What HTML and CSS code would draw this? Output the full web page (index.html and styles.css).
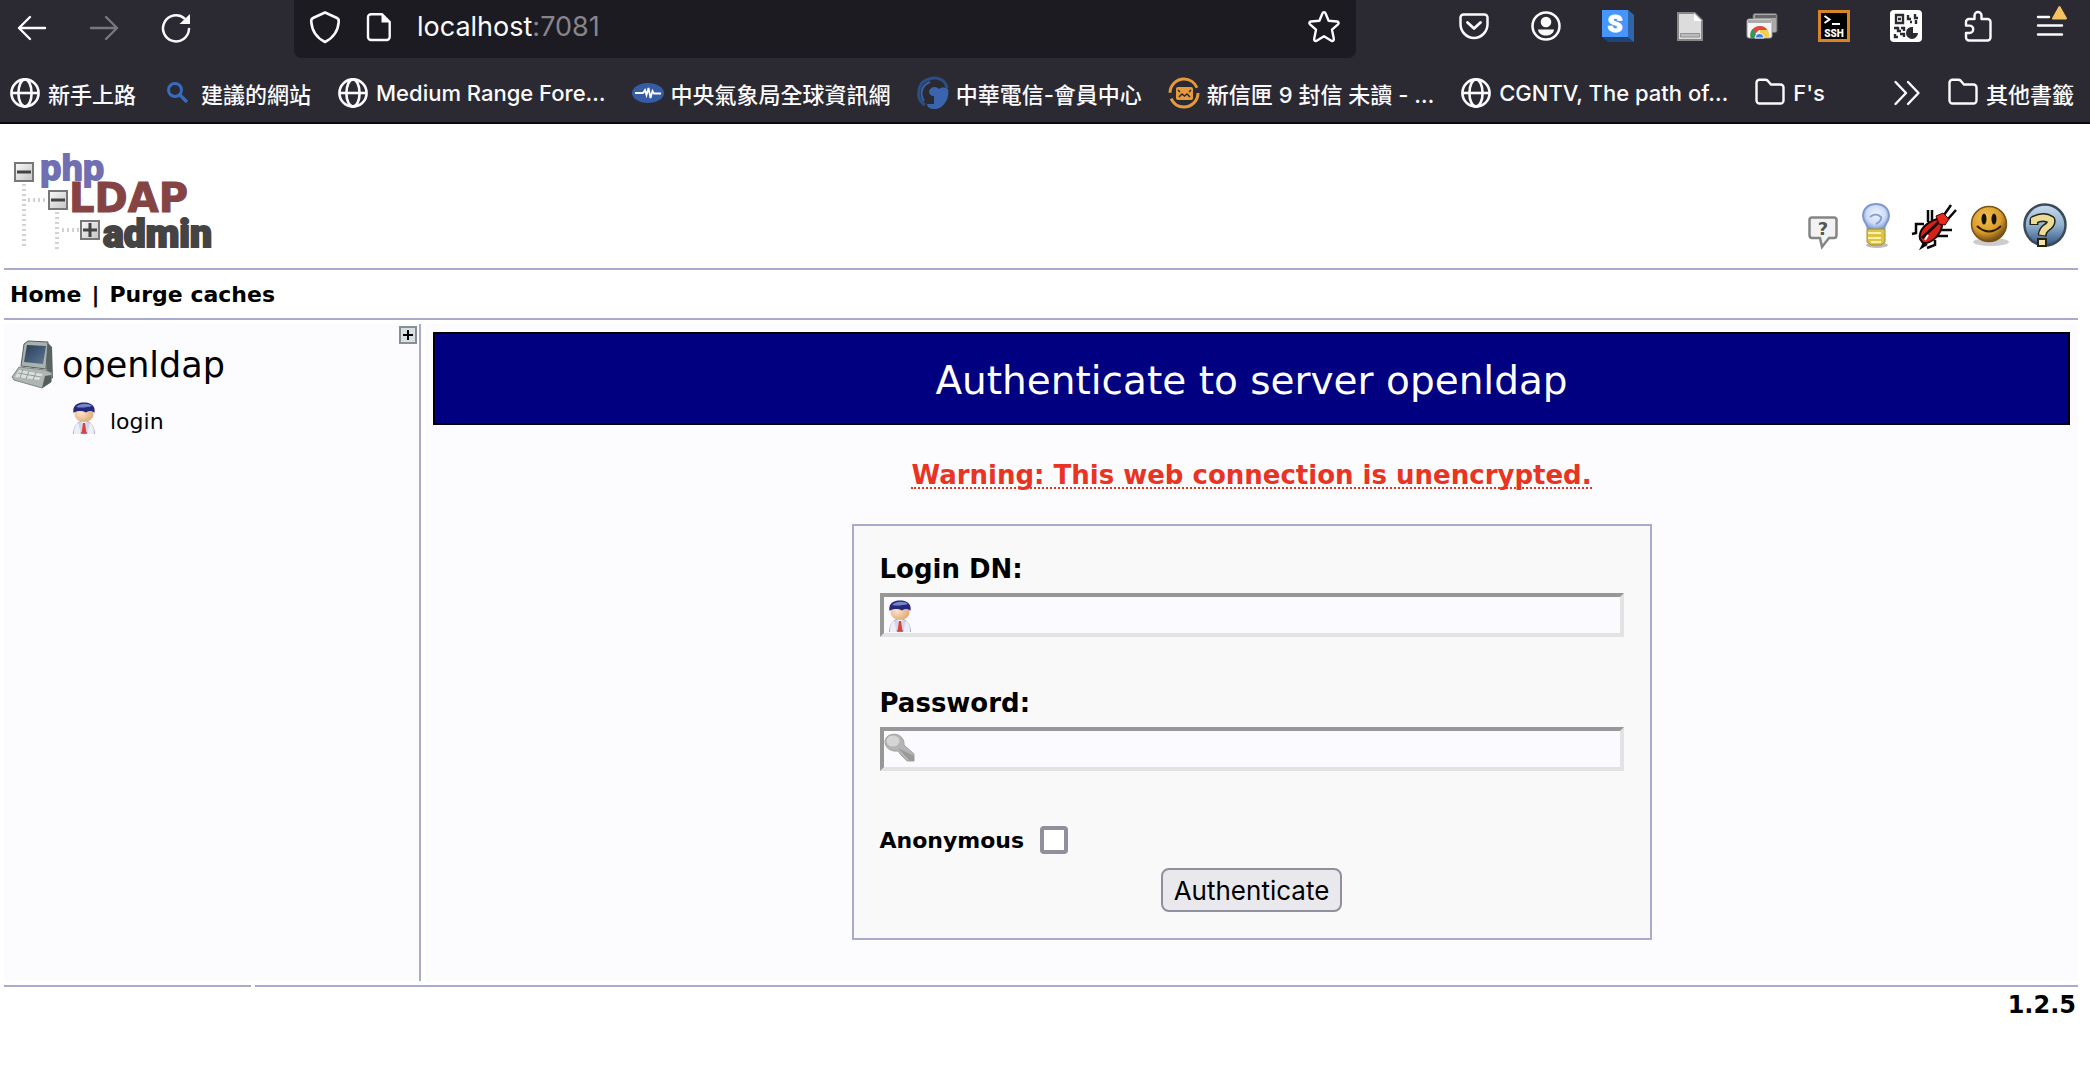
FILE: index.html
```html
<!DOCTYPE html>
<html lang="zh-Hant">
<head>
<meta charset="utf-8">
<title>phpLDAPadmin (1.2.5) -</title>
<link rel="stylesheet" href="styles.css">
</head>
<body>
<svg class="defs" width="0" height="0" aria-hidden="true">
  <defs>
    <linearGradient id="metal" x1="0" y1="0" x2="1" y2="1"><stop offset="0" stop-color="#fafafa"/><stop offset="1" stop-color="#c4c4c4"/></linearGradient>
    <radialGradient id="gold" cx=".4" cy=".3" r=".75"><stop offset="0" stop-color="#f3c04a"/><stop offset=".6" stop-color="#d99a2b"/><stop offset="1" stop-color="#5c3d10"/></radialGradient>
    <linearGradient id="sky" x1="0" y1="0" x2="0" y2="1"><stop offset="0" stop-color="#c9dcec"/><stop offset=".5" stop-color="#93b1cf"/><stop offset="1" stop-color="#2f5584"/></linearGradient>
    <radialGradient id="glass" cx=".5" cy=".4" r=".6"><stop offset="0" stop-color="#eef4fd"/><stop offset=".6" stop-color="#cddcf5"/><stop offset="1" stop-color="#7795d0"/></radialGradient>
    <radialGradient id="skin" cx=".35" cy=".4" r=".7"><stop offset="0" stop-color="#fde3c4"/><stop offset="1" stop-color="#dca777"/></radialGradient>
    <linearGradient id="screen" x1="0" y1="0" x2="1" y2="1"><stop offset="0" stop-color="#2a3c55"/><stop offset="1" stop-color="#5b7894"/></linearGradient>
    <symbol id="globe" viewBox="0 0 32 32"><g fill="none" stroke="#fbfbfe" stroke-width="2.6"><circle cx="16" cy="16" r="13.6"/><ellipse cx="16" cy="16" rx="6.6" ry="13.6"/><path d="M2.500 16H29.500"/></g></symbol>
    <symbol id="folder" viewBox="0 0 32 32"><path d="M2.500 8V23.500a3 3 0 0 0 3 3H26.500a3 3 0 0 0 3-3V10.500a3 3 0 0 0-3-3H17L13.500 3.500a3 3 0 0 0-2-.8H5.500a3 3 0 0 0-3 3Z" fill="none" stroke="#fbfbfe" stroke-width="2.400"/></symbol>
    <symbol id="user" viewBox="0 0 24 32">
      <path d="M1.500 32C2 23 6 19 12 19S22 23 22.500 32Z" fill="#d3d5e8" stroke="#a9abc9"/>
      <path d="M2 32V30H22V32Z" fill="#8d8fae"/>
      <path d="M6 21L9 32H2C2 26 3 23 6 21ZM18 21L15 32H22C22 26 21 23 18 21Z" fill="#eceef8"/>
      <path d="M9 19L12 23L15 19Z" fill="#fff"/>
      <path d="M11 21H13L14.500 31.500H9.500Z" fill="#d8433c"/>
      <ellipse cx="12" cy="12.500" rx="9.500" ry="7.500" fill="url(#skin)"/>
      <path d="M1.500 11C0 3 6 .5 12 .5S24 3 22.500 11C20 8.500 17 8.500 14 10.500C10 8.500 5 8.500 1.500 11Z" fill="#26267f"/>
      <path d="M4 5C7 1 17 .5 20 4C15 5.500 9 6 4 5Z" fill="#7387c4"/>
    </symbol>
  </defs>
</svg>

<header class="chrome">
  <div class="toolbar">
    <div class="nav-buttons">
      <button class="tool" type="button" aria-label="Back"><svg width="32" height="32" viewBox="0 0 32 32" fill="none" stroke="#fbfbfe" stroke-width="2.400" stroke-linecap="round" stroke-linejoin="round"><path d="M29 16H3M14 5L3 16L14 27"/></svg></button>
      <button class="tool" type="button" aria-label="Forward" disabled><svg width="32" height="32" viewBox="0 0 32 32" fill="none" stroke="#78777e" stroke-width="2.400" stroke-linecap="round" stroke-linejoin="round"><path d="M3 16H29M18 5L29 16L18 27"/></svg></button>
      <button class="tool" type="button" aria-label="Reload"><svg width="32" height="32" viewBox="0 0 32 32"><path d="M29 17A13 13 0 1 1 24.500 6.500" fill="none" stroke="#fbfbfe" stroke-width="2.500" stroke-linecap="round"/><path d="M30 2V12H19.500Z" fill="#fbfbfe"/></svg></button>
    </div>
    <div class="urlbar">
      <svg width="32" height="36" viewBox="0 0 32 36" fill="none" stroke="#fbfbfe" stroke-width="2.600" stroke-linejoin="round"><path d="M16 3.500L28 9C30 10 30 11 29.700 13C29 22 24 29 16 33C8 29 3 22 2.300 13C2 11 2 10 4 9Z"/></svg>
      <svg class="page-icon" width="28" height="32" viewBox="0 0 28 32"><path d="M6 3.200H17L24.700 11V26a3 3 0 0 1-3 3H6a3 3 0 0 1-3-3V6.200a3 3 0 0 1 3-3Z" fill="none" stroke="#fbfbfe" stroke-width="2.400"/><path d="M16.500 2.500V11.500H25.500Z" fill="#fbfbfe"/></svg>
      <div class="url">localhost<span class="port">:7081</span></div>
      <button class="star" type="button" aria-label="Bookmark this page"><svg width="34" height="34" viewBox="0 0 34 34" fill="none" stroke="#fbfbfe" stroke-width="2.400" stroke-linejoin="round"><path d="M15.500 3.200C16 1.800 18 1.800 18.500 3.200L21.600 10.800L30 11.500C31.700 11.700 32.200 13.300 31 14.300L25 19.700L26.800 28.800C27.200 30.700 25.700 31.500 24.300 30.700L17 26.200L9.700 30.700C8.300 31.500 6.800 30.700 7.200 28.800L9 19.700L3 14.300C1.800 13.300 2.300 11.700 4 11.500L12.400 10.800Z"/></svg></button>
    </div>
    <div class="extensions">
      <button class="tool" type="button" aria-label="Pocket"><svg width="32" height="32" viewBox="0 0 32 32" fill="none" stroke="#fbfbfe" stroke-width="2.500" stroke-linecap="round" stroke-linejoin="round"><path d="M5.500 4.500H26.500A3 3 0 0 1 29.500 7.500V14C29.500 22 23 28 16 28S2.500 22 2.500 14V7.500A3 3 0 0 1 5.500 4.500Z"/><path d="M9.500 12.500L16 18.500L22.500 12.500" stroke-width="2.800"/></svg></button>
      <button class="tool" type="button" aria-label="Account"><svg width="32" height="32" viewBox="0 0 32 32"><circle cx="16" cy="16" r="13.500" fill="none" stroke="#fbfbfe" stroke-width="2.500"/><circle cx="16" cy="12" r="5.300" fill="#fbfbfe"/><path d="M8 19.500H24C23.500 23.500 20 25.500 16 25.500S8.500 23.500 8 19.500Z" fill="#fbfbfe"/></svg></button>
      <button class="tool" type="button" aria-label="Stylus"><svg width="32" height="32" viewBox="0 0 32 32"><path d="M26 0L32 5V32H6L0 27Z" fill="#1d4377"/><path d="M26 0L32 5V32L26 27Z" fill="#2e65ab"/><path d="M0 0H26V27H0Z" fill="#4796ff"/><text x="13" y="22" text-anchor="middle" font-family="Roboto" font-weight="900" font-size="24" fill="#fff" stroke="#fff">S</text></svg></button>
      <button class="tool" type="button" aria-label="Reader"><svg width="32" height="32" viewBox="0 0 32 32"><path d="M3 2H21L29 10V31H3Z" fill="#888"/><path d="M5 4H20L27 11V29H5Z" fill="#dcdcdc"/><path d="M20 3V11H28Z" fill="#fff"/><path d="M6.500 23.500H25.500V27H6.500Z" fill="#bbb" stroke="#929292"/></svg></button>
      <button class="tool" type="button" aria-label="Tabs"><svg width="32" height="32" viewBox="0 0 32 32"><rect x="7" y="3.500" width="24" height="19" rx="2" fill="#aaa" stroke="#666"/><path d="M9 5H30V8H9Z" fill="#666"/><rect x="1" y="9" width="25" height="19" rx="2" fill="#f5f5f5" stroke="#999"/><path d="M2 10H25V13H2Z" fill="#aaa"/><path d="M5 28A9 9 0 0 1 13.500 16A9 9 0 0 1 21.500 20H13Z" fill="#dc4a3d"/><path d="M5 28A9 9 0 0 1 6.500 19L12 28Z" fill="#279b58"/><path d="M14 28V20H21.800A9 9 0 0 1 22.500 28Z" fill="#f8cd47"/><path d="M9 28A4.500 4.500 0 1 1 18 28Z" fill="#3f7ee8" stroke="#fff"/></svg></button>
      <button class="tool" type="button" aria-label="SSH"><svg width="32" height="32" viewBox="0 0 32 32"><rect x="1.500" y="1.500" width="29" height="29" fill="#000" stroke="#d98327" stroke-width="3"/><path d="M6.500 6L11.500 9.500L6.500 13M14 14H22" stroke="#fff" stroke-width="2" fill="none"/><text x="16" y="27" text-anchor="middle" font-family="Roboto" font-weight="900" font-size="10" fill="#fff">SSH</text></svg></button>
      <button class="tool" type="button" aria-label="QR code"><svg width="32" height="32" viewBox="0 0 32 32"><rect width="32" height="32" rx="4" fill="#fff"/><g fill="none" stroke="#2b2a33" stroke-width="2.400"><path d="M6 5H13V13H6ZM8 9H11M18 5V9H21M20 12H22M25 4V8H28M26 10V14M4 18H8V21H11M5 24V27H8M11 18H14V21M10 24H14V27"/></g><path d="M23 17A6 6 0 1 0 28 23H23Z" fill="#2b2a33"/></svg></button>
      <button class="tool" type="button" aria-label="Extensions"><svg width="32" height="32" viewBox="0 0 32 32" fill="none" stroke="#fbfbfe" stroke-width="2.400" stroke-linejoin="round"><path d="M12.500 9V5.500a3.500 3.500 0 0 1 7 0V9H25.500a3 3 0 0 1 3 3V27.500a3 3 0 0 1-3 3H7a3 3 0 0 1-3-3V23H7.500a3.700 3.700 0 0 0 0-7.400H4V12a3 3 0 0 1 3-3Z"/></svg></button>
      <button class="tool" type="button" aria-label="Menu"><svg width="32" height="32" viewBox="0 0 32 32"><path d="M4 7H15M4 15.500H28M4 24.500H28" stroke="#fbfbfe" stroke-width="2.400" stroke-linecap="round"/><path d="M25.500-3L32 8.500H19Z" fill="#f5c260" stroke="#f5c260" stroke-width="2" stroke-linejoin="round"/></svg></button>
    </div>
  </div>
  <nav class="bookmarks" aria-label="Bookmarks">
    <a href="#"><svg width="32" height="32"><use href="#globe"/></svg>新手上路</a>
    <a href="#"><svg width="32" height="32" viewBox="0 0 32 32" fill="none" stroke="#356cc0"><circle cx="13" cy="13" r="6.500" stroke-width="3"/><path d="M18 18L25 25" stroke-width="3.400"/></svg>建議的網站</a>
    <a href="#"><svg width="32" height="32"><use href="#globe"/></svg>Medium Range Fore…</a>
    <a href="#"><svg width="32" height="32" viewBox="0 0 32 32"><ellipse cx="16" cy="16" rx="16" ry="10" fill="#365ca5"/><path d="M3 16H11L13 13L14.500 18L16.500 11L18.500 21L20.500 14L22 16.500H29" fill="none" stroke="#fff" stroke-width="1.800"/></svg>中央氣象局全球資訊網</a>
    <a href="#"><svg width="32" height="32" viewBox="0 0 32 32"><path d="M8 28C-2 22 0 5 12 2C22-1 29 4 30 11" fill="none" stroke="#2c4f83" stroke-width="3"/><path d="M7 24C2 16 5 8 13 5" fill="none" stroke="#3862a8" stroke-width="2"/><path d="M12 14C14 9 19 9 22 12C24 10 28 10 31 12C33 22 26 32 18 32C13 32 10 30 10 27H17V19C14 19 12 17 12 14Z" fill="#3a64ad"/></svg>中華電信-會員中心</a>
    <a href="#"><svg width="32" height="32" viewBox="0 0 32 32"><circle cx="16" cy="16" r="14" fill="none" stroke="#e59a3c" stroke-width="3" stroke-dasharray="38 6"/><rect x="8" y="10" width="17" height="13" rx="2" fill="#e59a3c"/><path d="M10 13L12 15M23 13L21 15M11 20L14 17L16.500 19L19 17L22 20" fill="none" stroke="#2b2a33" stroke-width="1.500"/></svg>新信匣 9 封信 未讀 - …</a>
    <a href="#"><svg width="32" height="32"><use href="#globe"/></svg>CGNTV, The path of…</a>
    <a href="#"><svg width="32" height="32"><use href="#folder"/></svg>F's</a>
    <button class="overflow" type="button" aria-label="More bookmarks"><svg width="28" height="28" viewBox="0 0 28 28" fill="none" stroke="#fbfbfe" stroke-width="2.400" stroke-linecap="round" stroke-linejoin="round"><path d="M2.500 3L13 14L2.500 25M15 3L25.500 14L15 25"/></svg></button>
    <a href="#"><svg width="32" height="32"><use href="#folder"/></svg>其他書籤</a>
  </nav>
</header>

<div class="page">
  <div class="masthead">
    <a href="#" class="logo" aria-label="phpLDAPadmin">
      <svg width="204" height="104" viewBox="0 0 204 104">
        <g stroke="#d2d2d2" stroke-width="4" stroke-dasharray="2 3"><path d="M12 34V99M45 62V99"/><path d="M16 50H35M50 80H67"/></g>
        <g fill="url(#metal)" stroke="#777" stroke-width="2"><rect x="3" y="13" width="18" height="18"/><rect x="37" y="41" width="18" height="18"/><rect x="69" y="71" width="18" height="18"/></g>
        <path d="M5 22H19M39 50H53M71 80H85M78 73V87" stroke="#444" stroke-width="3"/>
        <text x="28" y="30" class="logo-php">php</text>
        <text x="57" y="62" class="logo-ldap">LDAP</text>
        <text x="91" y="97" class="logo-admin">admin</text>
      </svg>
    </a>
    <div class="tools">
      <a href="#" aria-label="Request feature"><svg width="48" height="48" viewBox="0 0 48 48"><path d="M15 15.500H37Q39.500 15.500 39.500 18V33Q39.500 36 37 36H32L25 45L23 36H15Q12.500 36 12.500 33V18Q12.500 15.500 15 15.500Z" fill="#f2f2f2" stroke="#858585" stroke-width="2.500"/><text x="26" y="33" text-anchor="middle" font-family="DejaVu Sans" font-weight="bold" font-size="18" fill="#555">?</text></svg></a>
      <a href="#" aria-label="Hints"><svg width="48" height="48" viewBox="0 0 48 48"><ellipse cx="24" cy="43" rx="11" ry="3" fill="#bbb"/><path d="M10 14C10 6 16 2 23 2S36 6 36 14C36 20 31 22 31 28H15C15 22 10 20 10 14Z" fill="url(#glass)" stroke="#8099cf" stroke-width="2"/><path d="M17 15Q23 10 28 15Q29 19 23 22" fill="none" stroke="#879fd4" stroke-width="2"/><path d="M14 27H32V40L28 43H18L14 40Z" fill="#dcc34a" stroke="#a78e27"/><path d="M15 31H28M15 36H28M18 40H28" stroke="#fff2a2" stroke-width="2"/></svg></a>
      <a href="#" aria-label="Report a bug"><svg width="48" height="48" viewBox="0 0 48 48"><g fill="none" stroke="#080808" stroke-width="2.500"><path d="M19 20V8M23 18V8M15 22H7V31L3 32M16 39L13 45L18 42M30 28H43M28 34H39M26 38V43L18 46M35 13L42 3M39 17L47 8"/></g><path d="M11 37C9 28 18 20 28 17L33 24C31 34 22 42 14 41Z" fill="#d72019" stroke="#160505" stroke-width="2"/><path d="M13 36L30 20" stroke="#160505" stroke-width="3"/><path d="M27 14L34 11L40 17L36 23L30 22Z" fill="#e9281e" stroke="#400"/><path d="M16 38L19 33" stroke="#fff" stroke-width="2"/></svg></a>
      <a href="#" aria-label="Donate"><svg width="48" height="48" viewBox="0 0 48 48"><ellipse cx="26" cy="40" rx="18" ry="4" fill="#ccc"/><circle cx="24" cy="22" r="17.500" fill="url(#gold)" stroke="#785317" stroke-width="1.500"/><ellipse cx="19" cy="17" rx="2.500" ry="5.500" fill="#17120a"/><ellipse cx="29" cy="17" rx="2.500" ry="5.500" fill="#17120a"/><path d="M12 24Q24 35 36 24" fill="none" stroke="#2c1d05" stroke-width="2"/></svg></a>
      <a href="#" aria-label="Help"><svg width="48" height="48" viewBox="0 0 48 48"><circle cx="24" cy="23" r="20.500" fill="url(#sky)" stroke="#3c4a5b" stroke-width="2.500"/><path d="M13 23V18Q23 13 30 18Q31 22 25 26Q22 28 21 34" fill="none" stroke="#242315" stroke-width="9" stroke-linejoin="round"/><path d="M13 22V18Q23 13 30 18Q31 22 25 26Q22 28 21 33" fill="none" stroke="#ecdb95" stroke-width="6"/><rect x="17" y="37" width="8" height="7" fill="#f3e5aa" stroke="#242315" stroke-width="2"/></svg></a>
    </div>
  </div>
  <nav class="menu"><a href="#">Home</a><span class="separator">|</span><a href="#">Purge caches</a></nav>

  <div class="columns">
    <aside class="tree">
      <button class="expand" type="button" aria-label="Expand"><svg width="18" height="18" viewBox="0 0 18 18"><rect x="1" y="1" width="16" height="16" fill="#d8e0e4" stroke="#858f94" stroke-width="2"/><path d="M4 9H14M9 4V14" stroke="#000" stroke-width="2"/></svg></button>
      <div class="server">
        <svg width="44" height="50" viewBox="0 0 44 50"><path d="M35 2L40 7L41 38L34 42Z" fill="#59635f"/><path d="M12 4L16 1L36 2L34 29L9 26Z" fill="#aab2ad" stroke="#555f5d"/><path d="M15 5L34 6L31 24L12 22Z" fill="url(#screen)"/><path d="M7 27L33 30L40 33L39 42L30 48L2 40L0 37Z" fill="#aeb6b3" stroke="#7e8785"/><path d="M7 30L31 34L27 40L3 37Z" fill="#dadfdc"/><path d="M6 33L29 37M11 29L8 38M17 31L14 39M24 32L21 40" stroke="#939c99"/><path d="M30 48L39 42V35L33 36Z" fill="#535d5b"/></svg>
        <span>openldap</span>
      </div>
      <a href="#" class="login"><svg width="24" height="32"><use href="#user"/></svg><span>login</span></a>
    </aside>

    <main class="content">
      <h1>Authenticate to server openldap</h1>
      <p class="notice"><span>Warning: This web connection is unencrypted.</span></p>
      <form class="auth">
        <label for="dn">Login DN:</label>
        <div class="field"><svg class="user" width="24" height="32"><use href="#user"/></svg><input id="dn" type="text"></div>
        <label for="pw">Password:</label>
        <div class="field"><svg width="32" height="32" viewBox="0 0 32 32"><path d="M8 1.500C13 0 21 4 20 12L30 21V28H23L20 25L17 22L14 18C6 19 1 14 1 9C1 5 4 2 8 1.500Z" fill="#b4b4b4" stroke="#a2a2a2"/><path d="M14 15L26 28H30V23Z" fill="#999"/><ellipse cx="9" cy="8" rx="6.500" ry="5.500" fill="#d5d5d5"/></svg><input id="pw" type="password"></div>
        <div class="anon"><label for="anon">Anonymous</label><input id="anon" type="checkbox"></div>
        <button class="submit" type="button">Authenticate</button>
      </form>
    </main>
  </div>

  <footer class="foot">
    <div class="foot-left"></div>
    <div class="foot-right">1.2.5</div>
  </footer>
</div>
</body>
</html>
```
FILE: styles.css
```css
* { box-sizing: border-box; }

body {
  margin: 0;
  background: #fff;
  color: #000;
  font-family: "DejaVu Sans", Verdana, sans-serif;
  font-size: 22px;
}

a { color: inherit; text-decoration: none; }
button { padding: 0; border: 0; background: none; font: inherit; }
svg { display: block; flex: none; overflow: visible; }
.defs { position: absolute; }

/* Browser toolbar */
.chrome {
  background: #2b2a33;
  border-bottom: 2px solid #09090b;
  color: #fbfbfe;
  font-family: Inter, "Noto Sans CJK TC", sans-serif;
}
.toolbar { display: flex; height: 58px; padding-right: 24px; }
.nav-buttons {
  display: flex;
  gap: 40px;
  width: 294px;
  padding: 12px 16px 0;
}
.tool { height: 32px; }
.urlbar {
  display: flex;
  flex: 1;
  align-items: center;
  padding: 0 15px 4px;
  border-radius: 0 0 8px 8px;
  background: #1c1b22;
}
.page-icon { margin: 0 24px; }
.url { flex: 1; font-size: 27px; line-height: 32px; }
.port { color: #86858c; }
.extensions {
  display: flex;
  gap: 40px;
  padding: 10px 0 0 102px;
}
.bookmarks {
  display: flex;
  gap: 26px;
  align-items: center;
  height: 64px;
  padding: 8px 16px 2px 9px;
  font-size: 22px;
  font-weight: 500;
  white-space: nowrap;
}
.bookmarks a { display: flex; align-items: center; gap: 7px; }
.overflow { margin-left: auto; }

/* Page */
.page { padding: 0 12px 0 4px; }
.masthead {
  display: flex;
  justify-content: space-between;
  align-items: flex-end;
  height: 144px;
  padding: 0 9px 14px 8px;
}
.logo-php { font: bold 35px "Liberation Sans", sans-serif; fill: #6f6fb2; stroke: #6f6fb2; stroke-width: 2; }
.logo-ldap { font: bold 40px "DejaVu Sans", sans-serif; fill: #864343; stroke: #864343; stroke-width: 1; }
.logo-admin { font: 900 39px Roboto, sans-serif; fill: #444; stroke: #444; stroke-width: 2; }
.tools { display: flex; gap: 8px; padding-bottom: 4px; }

.menu {
  border: solid #aaaacc;
  border-width: 2px 0;
  padding: 2px 6px 0;
  font-weight: bold;
  line-height: 46px;
}
.separator { padding: 0 10px; }

.columns { display: flex; gap: 4px; padding: 4px 0; }
.tree {
  position: relative;
  width: 417px;
  border-right: 2px solid #aaaacc;
  background: #fcfcfe;
  padding: 16px 8px 0;
}
.expand { position: absolute; top: 2px; right: 2px; }
.server { display: flex; align-items: center; gap: 6px; font-size: 35px; line-height: 50px; }
.login { display: flex; align-items: center; gap: 14px; padding: 12px 0 0 60px; }
.login span { padding-top: 8px; line-height: 24px; }

.content {
  flex: 1;
  background: #fcfcfe;
  padding: 8px 8px 41px;
}
h1 {
  margin: 0;
  padding: 22px 8px 18px;
  border: 2px solid #000;
  background: #000080;
  color: #fff;
  font-size: 39px;
  font-weight: normal;
  line-height: 49px;
  text-align: center;
}
.notice {
  margin: 36px 0 35px;
  color: #e93323;
  font-size: 26px;
  font-weight: bold;
  line-height: 28px;
  text-align: center;
}
.notice span { display: block; width: fit-content; height: 28px; margin: 0 auto; border-bottom: 2px dotted #e93323; }

.auth {
  display: flex;
  flex-direction: column;
  width: 800px;
  margin: 0 auto;
  padding: 26px;
  border: 2px solid #aaaacc;
  background: #f9f9f9;
  font-size: 26px;
  font-weight: bold;
  line-height: 34px;
}
.field {
  display: flex;
  align-items: center;
  height: 44px;
  margin: 7px 0 49px;
  border: 4px solid;
  border-color: #979797 #e3e3e3 #e3e3e3 #979797;
  background: #fafaff;
}
.field .user { margin: 2px 4px 0; }
.field input {
  flex: 1;
  min-width: 0;
  height: 36px;
  padding: 0 4px;
  border: 0;
  outline: 0;
  background: none;
  font: 26px Inter, sans-serif;
}
.anon { display: flex; align-items: center; gap: 16px; font-size: 22px; padding-top: 2px; }
.anon label { padding-top: 2px; }
.anon input {
  appearance: none;
  width: 28px;
  height: 28px;
  margin: 0;
  border: 4px solid #8f8f9d;
  border-radius: 4px;
  background: #fff;
}
.submit {
  align-self: center;
  height: 44px;
  margin-top: 10px;
  padding: 0 11px;
  border: 2px solid #8f8f9d;
  border-radius: 8px;
  background: #e9e9ed;
  font: 26px Inter, sans-serif;
}

.foot { display: flex; gap: 4px; font-size: 24px; font-weight: bold; line-height: 36px; }
.foot div { border-top: 2px solid #aaaacc; }
.foot-left { width: 247px; }
.foot-right { flex: 1; text-align: right; padding-right: 2px; }
```
